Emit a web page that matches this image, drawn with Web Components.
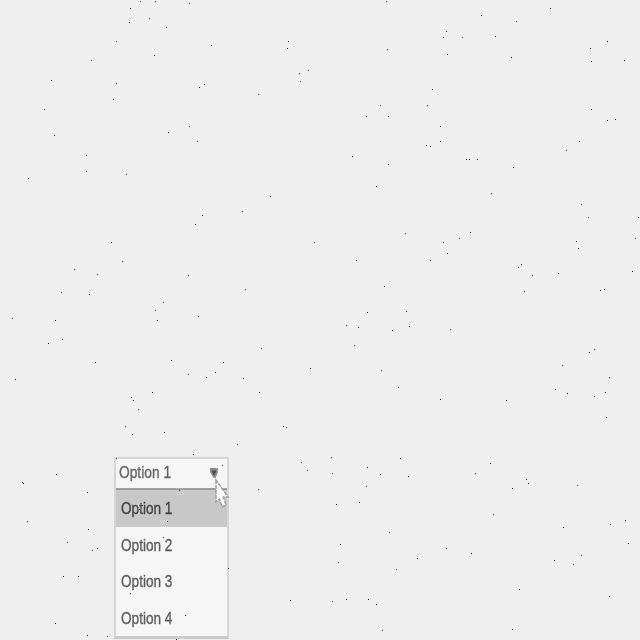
<!DOCTYPE html>
<html lang="en">
<head>
<meta charset="utf-8">
<title>Select</title>
<style>
html,body{margin:0;width:640px;height:640px;overflow:hidden;background:#efefef;font-family:"Liberation Sans",sans-serif}
</style>
</head>
<body>
<demo-page>
  <select-menu>
    <select-field slot="field">Option 1</select-field>
    <select-option selected>Option 1</select-option>
    <select-option>Option 2</select-option>
    <select-option>Option 3</select-option>
    <select-option>Option 4</select-option>
  </select-menu>
</demo-page>
<script>
class DemoPage extends HTMLElement {
  constructor() {
    super();
    this.attachShadow({mode:'open'}).innerHTML = `
      <style>
        :host{display:block;position:relative;box-sizing:border-box;width:640px;height:640px;padding:457px 0 0 114px;background:#efefef;overflow:hidden}
        speck-field{position:absolute;inset:0;pointer-events:none}
        mouse-pointer{position:absolute;left:212px;top:477px}
      </style>
      <slot></slot><mouse-pointer></mouse-pointer><speck-field></speck-field>`;
  }
}
class SelectMenu extends HTMLElement {
  constructor() {
    super();
    this.attachShadow({mode:'open'}).innerHTML = `
      <style>
        :host{display:flex;flex-direction:column;box-sizing:border-box;width:115px;height:182px;border:solid #d6d6d6;border-width:2px 2px 3px 2px;border-bottom-color:#cbcbcb;background:#f6f6f6;filter:blur(.55px)}
        .list{display:flex;flex-direction:column;border-top:2px solid #9c9c9c}
      </style>
      <slot name="field"></slot><div class="list"><slot></slot></div>`;
  }
}
class SelectField extends HTMLElement {
  constructor() {
    super();
    this.attachShadow({mode:'open'}).innerHTML = `
      <style>
        :host{display:flex;align-items:center;justify-content:space-between;box-sizing:border-box;height:30px;padding:0 8px 2px 3px;font-size:17px;color:#666;background:#f6f6f6}
        span{display:block;width:52px;white-space:nowrap;transform:scaleX(.81);transform-origin:0 50%;filter:blur(.65px);-webkit-text-stroke:.35px #666}
        svg{display:block;filter:blur(.6px)}
      </style>
      <span><slot></slot></span>
      <svg width="10" height="10"><path d="M1 0H9V4L6.5 10H4.5L1 4Z" fill="#8c8c8c"/><path d="M2.5 2.5H7.5L5 8Z" fill="#4c4c4c"/></svg>`;
  }
}
class SelectOption extends HTMLElement {
  constructor() {
    super();
    this.attachShadow({mode:'open'}).innerHTML = `
      <style>
        :host{display:flex;align-items:center;box-sizing:border-box;height:36.4px;padding:1.5px 0 0 5px;font-size:17px;color:#5c5c5c}
        :host([selected]){background:#c8c8c8;color:#424242}
        span{display:block;width:52px;white-space:nowrap;transform:scaleX(.8);transform-origin:0 50%;filter:blur(.65px);-webkit-text-stroke:.35px currentColor}
      </style>
      <span><slot></slot></span>`;
  }
}
class MousePointer extends HTMLElement {
  constructor() {
    super();
    this.attachShadow({mode:'open'}).innerHTML = `
      <style>:host{display:block;filter:blur(.75px)}svg{display:block}</style>
      <svg width="20" height="34"><path d="M4 3V25L7.500 22L10 30L14 28L11.500 20H16Z" fill="#fafafa" stroke="#a0a0a0" stroke-width="1.500" stroke-dasharray="4 1"/><path d="M5.500 7V21L8 19L11 27L12 26L9.500 18H13Z" fill="#fafafa"/></svg>`;
  }
}
// Single-pixel specks; each tile holds x,y pairs in thirds of a pixel from its origin.
const TILES = [
 [0,0,'421,4 466,4 568,10 391,25 448,55 388,67 499,82 349,124 634,136 463,166 274,181 154,241 349,250 613,253 598,262 340,298 133,328 568,379 505,397 163,406 592,424 259,466 259,514 379,523 85,535'],
 [213,0,'520,4 226,124 223,145 523,148 286,211 259,220 262,244 136,283 502,316 460,349 526,349 418,469 526,493 490,559 172,589 88,634'],
 [426,0,'373,25 166,46 271,64 61,94 52,112 109,112 208,109 544,124 493,145 64,163 256,172 595,181 496,184 19,268 4,316 496,328 568,358 544,361 43,379 43,424 460,424 1,436 13,439 421,451 121,478 130,478 154,478 262,502 196,580 466,613'],
 [0,213,'607,7 586,34 334,88 367,145 223,169 292,184 565,187 184,238 268,244 490,268 466,292 595,310 37,316 166,322 472,322 187,379 145,391 514,442 286,448 565,484 619,493 46,499 457,538 394,553 400,562 415,589'],
 [213,213,'577,61 304,88 430,142 514,220 97,229 580,295 463,298 400,337 589,340 436,343 538,352 424,397 145,406 31,448 292,466 505,472 7,478 91,496 556,523 139,538'],
 [426,213,'487,13 637,13 133,58 100,76 628,76 451,85 52,88 457,106 64,121 13,142 286,154 277,163 619,175 397,181 319,187 535,229 523,232 295,235 73,349 505,409 490,418 409,457 550,493 388,529 538,538 424,541 505,550 43,559 241,562 541,613'],
 [0,426,'376,1 493,19 397,25 580,85 349,97 169,145 67,169 70,172 538,193 262,199 418,250 82,286 502,286 265,310 490,334 202,349 292,367 277,373 190,451 235,451 391,502 556,568 166,592 262,628 322,631 529,640'],
 [213,426,'211,1 220,4 73,55 355,94 562,97 265,109 28,118 463,124 283,133 358,142 502,145 586,151 460,181 136,190 439,229 370,235 529,319 382,355 613,397 376,409 46,427 550,430 400,520 466,520 232,523 358,526 490,535 508,613'],
 [426,426,'193,112 148,142 301,160 307,172 454,178 259,187 202,265 598,283 553,295 412,304 607,352 61,367 136,382 466,388 385,403 442,415 280,490 550,511 259,610']
];
class SpeckField extends HTMLElement {
  constructor() {
    super();
    let dots = '', halo = '';
    for (const [ox, oy, list] of TILES) for (const pair of list.split(' ')) {
      const [px, py] = pair.split(',').map(Number);
      const x = ox + Math.floor(px / 3), y = oy + Math.floor(py / 3);
      dots += `M${x} ${y}h1v1h-1z`;
      // A faint checker fills the 8px cell around every speck.
      const cx = x & ~7, cy = y & ~7;
      for (let j = 0; j < 8; j += 2) for (let i = j % 4 / 2; i < 8; i += 2) halo += `M${cx+i} ${cy+j}h1v1h-1z`;
    }
    this.attachShadow({mode:'open'}).innerHTML = `
      <style>:host{display:block}svg{display:block}</style>
      <svg width="640" height="640" shape-rendering="crispEdges"><path d="${halo}" fill="#fff" opacity=".3"/><path d="${dots}" fill="#000"/></svg>`;
  }
}
customElements.define('mouse-pointer', MousePointer);
customElements.define('speck-field', SpeckField);
customElements.define('select-option', SelectOption);
customElements.define('select-field', SelectField);
customElements.define('select-menu', SelectMenu);
customElements.define('demo-page', DemoPage);
</script>
</body>
</html>
